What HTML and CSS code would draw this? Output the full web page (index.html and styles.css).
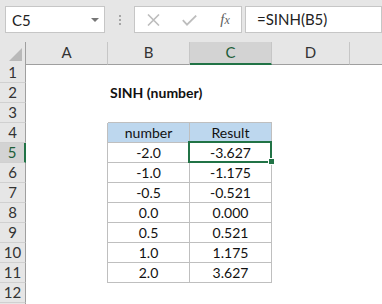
FILE: index.html
```html
<!DOCTYPE html>
<html lang="en">
<head>
  <meta charset="UTF-8" />
  <title>SINH function</title>
  <link rel="stylesheet" href="styles.css">
</head>
<body>
  <div class="toolbar">
    <div class="namebox"><span>C5</span><span class="caret"></span></div>
    <div class="grip"><i></i><i></i><i></i></div>
    <div class="fxbox">
      <svg class="ico-x" width="13" height="12" viewBox="0 0 13 12"><path d="M1 0.5 L12 11.5 M12 0.5 L1 11.5" stroke="#bdbdbd" stroke-width="1.6" fill="none"/></svg>
      <svg class="ico-ok" width="15" height="11" viewBox="0 0 15 11"><path d="M0.8 5.2 L5 9.6 L14.2 0.6" stroke="#bdbdbd" stroke-width="1.8" fill="none"/></svg>
      <span class="fx">f<small>x</small></span>
    </div>
    <div class="formula">=SINH(B5)</div>
  </div>

  <div class="sheet">
    <div class="row head">
      <div class="corner"><svg width="13" height="13" viewBox="0 0 13 13"><path d="M13 0 L13 13 L0 13 Z" fill="#b9b9b9"/></svg></div>
      <div class="ch">A</div>
      <div class="ch">B</div>
      <div class="ch on">C</div>
      <div class="ch">D</div>
      <div class="ch last"></div>
    </div>

    <div class="row"><div class="rh">1</div><div></div><div></div><div></div><div></div><div></div></div>
    <div class="row"><div class="rh">2</div><div></div><div class="title">SINH (number)</div><div></div><div></div><div></div></div>
    <div class="row"><div class="rh">3</div><div></div><div class="cell above"></div><div class="cell above"></div><div></div><div></div></div>
    <div class="row"><div class="rh">4</div><div class="edge"></div><div class="cell t hd">number</div><div class="cell t hd">Result</div><div></div><div></div></div>
    <div class="row"><div class="rh on">5</div><div class="edge"></div><div class="cell t">-2.0</div><div class="cell t active">-3.627<span class="sel"></span><span class="handle"></span></div><div></div><div></div></div>
    <div class="row"><div class="rh">6</div><div class="edge"></div><div class="cell t">-1.0</div><div class="cell t">-1.175</div><div></div><div></div></div>
    <div class="row"><div class="rh">7</div><div class="edge"></div><div class="cell t">-0.5</div><div class="cell t">-0.521</div><div></div><div></div></div>
    <div class="row"><div class="rh">8</div><div class="edge"></div><div class="cell t">0.0</div><div class="cell t">0.000</div><div></div><div></div></div>
    <div class="row"><div class="rh">9</div><div class="edge"></div><div class="cell t">0.5</div><div class="cell t">0.521</div><div></div><div></div></div>
    <div class="row"><div class="rh">10</div><div class="edge"></div><div class="cell t">1.0</div><div class="cell t">1.175</div><div></div><div></div></div>
    <div class="row"><div class="rh">11</div><div class="edge"></div><div class="cell t">2.0</div><div class="cell t">3.627</div><div></div><div></div></div>
    <div class="row"><div class="rh">12</div><div></div><div></div><div></div><div></div><div></div></div>
    <div class="row"><div class="rh"></div><div></div><div></div><div></div><div></div><div></div></div>
  </div>
</body>
</html>
```

FILE: styles.css
```css
* { box-sizing: border-box; }

body {
  margin: 0;
  width: 382px;
  height: 304px;
  overflow: hidden;
  background: #fff;
  font-family: Lato, "Open Sans", sans-serif;
  font-size: 14px;
  color: #111;
}

/* formula bar */
.toolbar {
  height: 42px;
  background: #e6e6e6;
  display: flex;
  align-items: flex-start;
  padding: 6px 0 0 5px;
  overflow: hidden;
}

.namebox {
  width: 102px;
  height: 27px;
  background: #fff;
  border: 1px solid #c6c6c6;
  display: flex;
  align-items: center;
  justify-content: space-between;
  padding: 0 5px 0 6px;
  color: #222;
  font-size: 15px;
}

.caret {
  width: 0;
  height: 0;
  border-left: 4px solid transparent;
  border-right: 4px solid transparent;
  border-top: 4px solid #767676;
}

.grip {
  width: 30px;
  height: 27px;
  display: flex;
  flex-direction: column;
  align-items: center;
  justify-content: center;
  gap: 2px;
}

.grip i {
  display: block;
  width: 2px;
  height: 2px;
  background: #a6a6a6;
}

.fxbox {
  width: 110px;
  height: 27px;
  background: #fff;
  border: 1px solid #c6c6c6;
  display: flex;
  align-items: center;
  padding-left: 12px;
}

.ico-ok { margin-left: 22px; margin-top: 2px; }

.fx {
  margin-left: 23px;
  font-family: "Liberation Serif", serif;
  font-style: italic;
  font-size: 15px;
  color: #5f5f5f;
}

.fx small { font-size: 12px; }

.formula {
  margin-left: 3px;
  width: 140px;
  height: 27px;
  background: #fff;
  border: 1px solid #c6c6c6;
  padding-left: 11px;
  line-height: 25px;
  color: #222;
  font-size: 15px;
}

/* grid */
.row {
  display: grid;
  grid-template-columns: 26px 82px 82px 82px 78px 1fr;
  height: 20px;
}

.row > div {
  line-height: 19px;
  text-align: center;
  white-space: nowrap;
}

.row.head { height: 21px; }

.corner, .ch {
  background: #e6e6e6;
  border-bottom: 1px solid #9f9f9f;
}

.corner {
  border-right: 1px solid #9f9f9f;
  display: flex;
  align-items: flex-end;
  justify-content: flex-end;
  padding: 0 3px 3px 0;
}

.corner svg { display: block; }

.ch {
  border-right: 1px solid #c6c6c6;
  color: #333;
  line-height: 21px !important;
  font-size: 15px;
}

.ch.last { border-right: none; }

.ch.on {
  background: #d3d3d3;
  border-bottom: 2px solid #217346;
  color: #1d5e38;
}

.rh {
  background: #e6e6e6;
  border-right: 1px solid #9f9f9f;
  border-bottom: 1px solid #d0d0d0;
  color: #333;
  font-size: 15px;
}

.rh.on {
  background: #d3d3d3;
  border-right: 2px solid #217346;
  color: #1d5e38;
}

.title {
  text-align: left !important;
  padding-left: 2px;
  font-weight: bold;
  line-height: 20px !important;
}

.edge { border-right: 1px solid #bfbfbf; }
.above { border-bottom: 1px solid #bfbfbf; }

.cell.t {
  border-right: 1px solid #bfbfbf;
  border-bottom: 1px solid #bfbfbf;
}

.cell.hd { background: #bdd7ee; }

.active { position: relative; }

.sel {
  position: absolute;
  left: -2px;
  top: -2px;
  width: 84px;
  height: 22px;
  border: 2px solid #217346;
}

.handle {
  position: absolute;
  left: 78px;
  top: 15px;
  width: 7px;
  height: 7px;
  background: #217346;
  border: 1px solid #fff;
}
```
